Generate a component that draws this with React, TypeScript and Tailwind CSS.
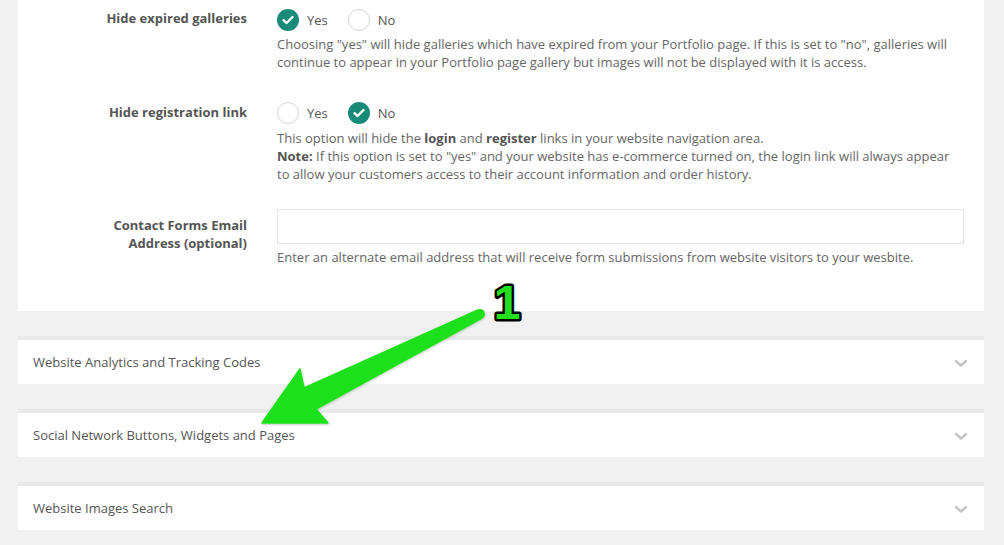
import React from "react";

function Radio({ checked, label }: { checked: boolean; label: string }) {
  return (
    <div className="flex items-center gap-[8px]">
      {checked ? (
        <span className="flex h-[22px] w-[22px] items-center justify-center rounded-full bg-[#178a78]">
          <svg width="12" height="10" viewBox="0 0 12 10">
            <path d="M1.5 5.2 L4.6 8 L10.5 2" fill="none" stroke="#fff" strokeWidth="2.4" strokeLinecap="round" strokeLinejoin="round" />
          </svg>
        </span>
      ) : (
        <span className="h-[22px] w-[22px] rounded-full border border-[#d4d4d4] bg-white" />
      )}
      <span className="text-[13px] leading-[18px] text-[#555]">{label}</span>
    </div>
  );
}

function Row({ label, children, labelPad = "pt-0", className = "" }: { label: React.ReactNode; children: React.ReactNode; labelPad?: string; className?: string }) {
  return (
    <div className={`grid grid-cols-[229px_1fr] gap-x-[30px] ${className}`}>
      <div className={`text-right text-[13px] font-bold leading-[18px] text-[#555] ${labelPad}`}>{label}</div>
      <div>{children}</div>
    </div>
  );
}

function Card({ title }: { title: string }) {
  return (
    <div className="border-t-4 border-[#e6e8ea] bg-white">
      <div className="flex h-[44px] items-center justify-between pl-[15px] pr-[16px] pt-[2px]">
        <span className="text-[13px] text-[#555]">{title}</span>
        <svg width="14" height="9" viewBox="0 0 14 9">
          <path d="M2 2 L7 6.5 L12 2" fill="none" stroke="#c4c4c4" strokeWidth="2.4" strokeLinecap="round" strokeLinejoin="round" />
        </svg>
      </div>
    </div>
  );
}

export default function App() {
  return (
    <div className="relative h-[545px] w-full overflow-hidden bg-[#f1f1f1] pl-[18px] pr-[20px]" style={{ fontFamily: '"Open Sans", "Noto Sans", sans-serif' }}>
      <div className="bg-white pb-[45px] pr-[20px] pt-[9px]">
        <Row label="Hide expired galleries" labelPad="pt-[-1px]">
          <div className="flex items-center gap-[20px]">
            <Radio checked label="Yes" />
            <Radio checked={false} label="No" />
          </div>
          <p className="mt-[4px] text-[13px] leading-[18px] text-[#666]">
            Choosing "yes" will hide galleries which have expired from your Portfolio page. If this is set to "no", galleries will continue to appear in your Portfolio page gallery but images will not be displayed with it is access.
          </p>
        </Row>
        <Row label="Hide registration link" labelPad="pt-px" className="mt-[31px]">
          <div className="flex items-center gap-[20px]">
            <Radio checked={false} label="Yes" />
            <Radio checked label="No" />
          </div>
          <p className="mt-[5px] text-[13px] leading-[18px] text-[#666]">
            This option will hide the <b className="text-[#555]">login</b> and <b className="text-[#555]">register</b> links in your website navigation area.
            <br />
            <b className="text-[#555]">Note:</b> If this option is set to "yes" and your website has e-commerce turned on, the login link will always appear to allow your customers access to their account information and order history.
          </p>
        </Row>
        <Row label={<>Contact Forms Email<br />Address (optional)</>} labelPad="pt-[7px]" className="mt-[26px]">
          <div className="h-[35px] w-full border border-[#e3e3e3] bg-white" />
          <p className="mt-[4px] text-[13px] leading-[18px] text-[#666]">
            Enter an alternate email address that will receive form submissions from website visitors to your wesbite.
          </p>
        </Row>
      </div>
      <div className="mt-[25px] flex flex-col gap-[25px]">
        <Card title="Website Analytics and Tracking Codes" />
        <Card title="Social Network Buttons, Widgets and Pages" />
        <Card title="Website Images Search" />
      </div>

      <svg className="pointer-events-none absolute left-0 top-0" width="1004" height="545" viewBox="0 0 1004 545">
        <defs>
          <filter id="sh" x="-10%" y="-10%" width="120%" height="120%">
            <feDropShadow dx="0" dy="1" stdDeviation="1.2" floodColor="#000" floodOpacity="0.25" />
          </filter>
        </defs>
        <path
          d="M262 423 L300 369 L304 388 L478 310 Q483 309 484 313 Q485 316 482 318 L316 409 L328 423 Z"
          fill="#1fe01a"
          stroke="#1fe01a"
          strokeWidth="1.5"
          strokeLinejoin="round"
          filter="url(#sh)"
        />
        <text
          x="507"
          y="319"
          textAnchor="middle"
          fontFamily='"Liberation Sans", Arial, sans-serif'
          fontWeight="900"
          fontSize="48"
          fill="#22e01e"
          stroke="#000"
          strokeWidth="5"
          strokeLinejoin="round"
          paintOrder="stroke"
        >
          1
        </text>
      </svg>
    </div>
  );
}
